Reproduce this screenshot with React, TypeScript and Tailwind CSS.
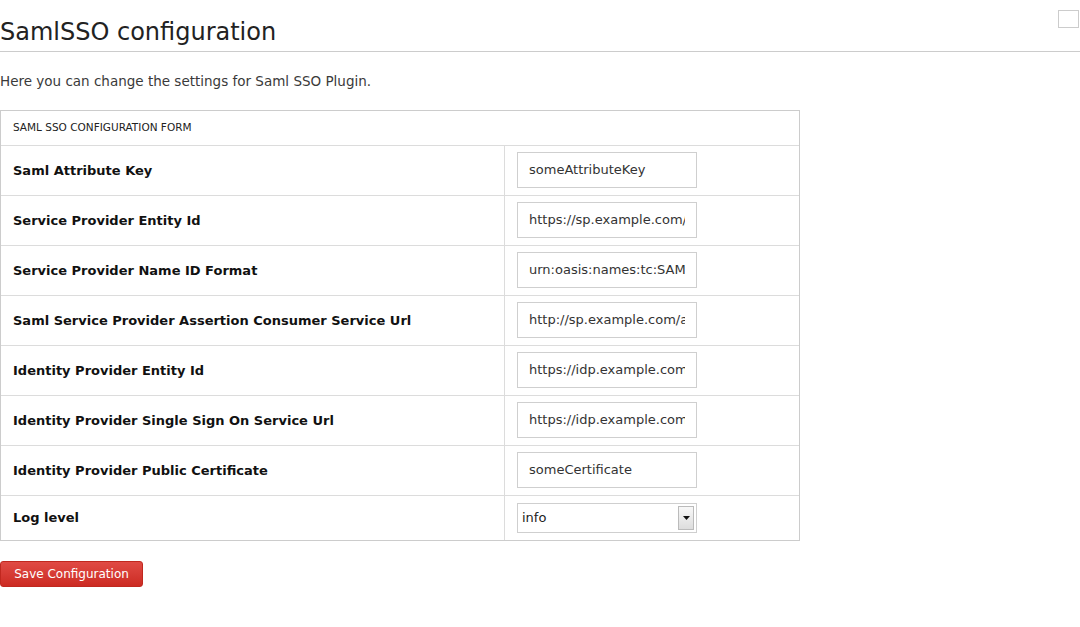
import React from "react";

const rows: { label: string; value: string }[] = [
  { label: "Saml Attribute Key", value: "someAttributeKey" },
  { label: "Service Provider Entity Id", value: "https://sp.example.com/saml" },
  { label: "Service Provider Name ID Format", value: "urn:oasis:names:tc:SAML:1.1:nameid-format:unspecified" },
  { label: "Saml Service Provider Assertion Consumer Service Url", value: "http://sp.example.com/acs" },
  { label: "Identity Provider Entity Id", value: "https://idp.example.com/saml" },
  { label: "Identity Provider Single Sign On Service Url", value: "https://idp.example.com/sso" },
  { label: "Identity Provider Public Certificate", value: "someCertificate" },
];

function ConfigRow({ label, value }: { label: string; value: string }) {
  return (
    <div className="flex h-[50px] border-t border-[#dcdcdc]">
      <div className="w-[504px] flex items-center pl-[12px] font-bold text-[13px] text-[#111] border-r border-[#dcdcdc]">
        {label}
      </div>
      <div className="flex-1 flex items-center pl-[12px] pb-[2px]">
        <input
          readOnly
          value={value}
          className="w-[180px] h-[36px] border border-[#cfcfcf] px-[11px] text-[13px] text-[#333] outline-none bg-white"
        />
      </div>
    </div>
  );
}

function App() {
  return (
    <div className="relative w-[1080px] h-[627px] bg-white font-['DejaVu_Sans',Verdana,sans-serif] text-[#333]">
      <div className="absolute right-[1px] top-[10px] w-[21px] h-[18px] border border-[#cccccc]" />
      <h1 className="text-[24px] leading-none text-[#222] pt-[20px] pb-[7px] border-b border-[#cccccc]">
        SamlSSO configuration
      </h1>
      <p className="text-[13.5px] mt-[21px] leading-[16px] text-[#3a3a3a]">
        Here you can change the settings for Saml SSO Plugin.
      </p>
      <div className="mt-[21px] w-[800px] border border-[#cccccc]">
        <div className="h-[34px] flex items-center pl-[12px] text-[10.5px] text-[#222]">
          SAML SSO CONFIGURATION FORM
        </div>
        {rows.map((r) => (
          <ConfigRow key={r.label} label={r.label} value={r.value} />
        ))}
        <div className="flex h-[45px] border-t border-[#dcdcdc]">
          <div className="w-[504px] flex items-center pl-[12px] font-bold text-[13px] text-[#111] border-r border-[#dcdcdc]">
            Log level
          </div>
          <div className="flex-1 flex items-center pl-[12px]">
            <div className="w-[180px] h-[30px] border border-[#cfcfcf] flex items-center justify-between pl-[4px] pr-[2px] text-[13px] text-[#222]">
              <span>info</span>
              <div className="w-[16px] h-[24px] border border-[#bbbbbb] bg-gradient-to-b from-[#f8f8f8] to-[#dddddd] flex items-center justify-center">
                <svg width="7" height="4" viewBox="0 0 7 4">
                  <path d="M0 0h7L3.5 4z" fill="#111" />
                </svg>
              </div>
            </div>
          </div>
        </div>
      </div>
      <button className="mt-[20px] w-[143px] h-[26px] rounded-[3px] bg-gradient-to-b from-[#e04a44] to-[#cc2a22] text-white text-[12px] border border-[#c0281f]">
        Save Configuration
      </button>
    </div>
  );
}

export default App;
